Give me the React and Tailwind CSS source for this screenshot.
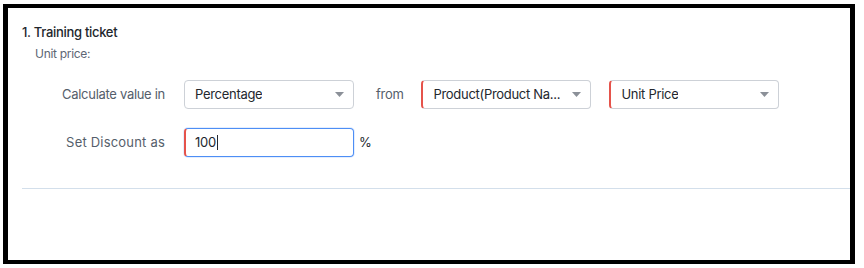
import React from "react";

function Caret() {
  return (
    <svg width="9" height="5" viewBox="0 0 9 5" className="shrink-0">
      <path d="M0 0 L9 0 L4.5 5 Z" fill="#8b9098" />
    </svg>
  );
}

function Select({ value, required }) {
  return (
    <div
      className={`flex h-[29px] w-[170px] items-center justify-between rounded-[4px] border border-[#cdd1d7] bg-white pl-[10px] pr-[9px] text-[13px] text-[#23272e] ${
        required ? "border-l-2 border-l-[#e5534b] pl-[9px]" : ""
      }`}
    >
      <span className="truncate">{value}</span>
      <Caret />
    </div>
  );
}

function Row({ label, labelClass = "", children }) {
  return (
    <div className="flex items-center">
      <div className={`w-[157px] text-right text-[13px] text-[#555e6b] ${labelClass}`}>{label}</div>
      <div className="ml-[19px] flex items-center">{children}</div>
    </div>
  );
}

export default function App() {
  return (
    <div
      className="h-[268px] w-[864px] bg-white pl-[3px] pt-[4px] tracking-[-0.3px]"
      style={{ fontFamily: "Inter, 'Noto Sans', sans-serif" }}
    >
      <div className="h-[260px] w-[852px] border-x-[5px] border-y-4 border-black bg-white">
        <div className="pl-[14px] pt-[16px] text-[13px] leading-[16px] font-medium text-[#22262c]">
          1. Training ticket
        </div>
        <div className="mt-[6px] pl-[27px] text-[12px] leading-[16px] text-[#5d6674]">Unit price:</div>

        <div className="mt-[18px] flex flex-col gap-[19px]">
          <Row label="Calculate value in">
            <Select value="Percentage" />
            <span className="ml-[22px] mr-[18px] text-[13px] text-[#555e6b]">from</span>
            <Select value="Product(Product Na..." required />
            <div className="ml-[18px]">
              <Select value="Unit Price" required />
            </div>
          </Row>
          <Row label="Set Discount as" labelClass="tracking-[0.2px]">
            <div className="flex h-[29px] w-[170px] items-center rounded-[4px] border border-[#4d8ef5] border-l-2 border-l-[#e5534b] bg-white pl-[9px] text-[13px] text-[#23272e] shadow-[0_0_0_1px_rgba(77,142,245,0.15)]">
              <span>100</span>
              <span className="ml-[1px] inline-block h-[15px] w-px bg-[#23272e]" />
            </div>
            <span className="ml-[5px] text-[13px] text-[#23272e]">%</span>
          </Row>
        </div>

        <div className="ml-[14px] mt-[31px] h-px bg-[#d3dfeb]" />
      </div>
    </div>
  );
}
